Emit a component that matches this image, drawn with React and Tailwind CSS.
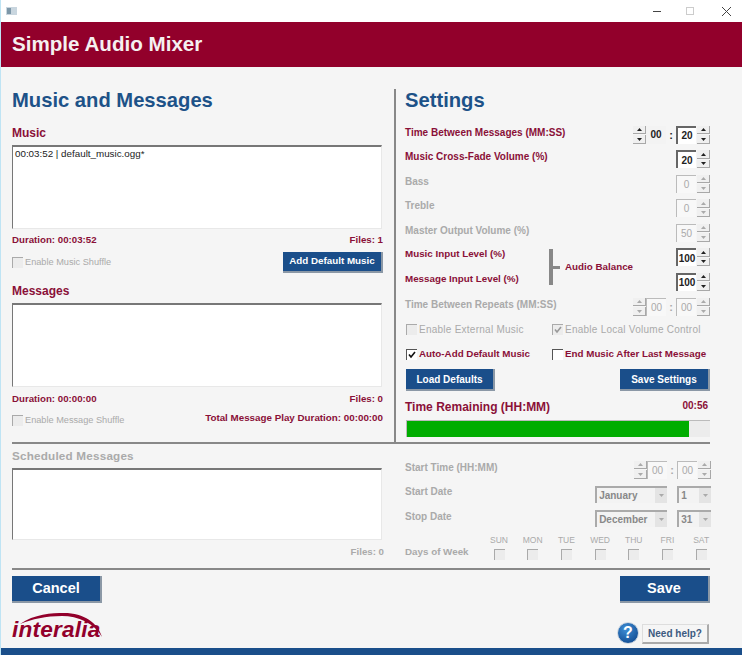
import React from 'react';

const Tri = ({ up, off }) => (
  <svg width="5" height="3" viewBox="0 0 5 3" className="block">
    <path d={up ? 'M2.5 0L5 3H0z' : 'M0 0h5L2.5 3z'} fill={off ? '#aaa' : '#222'} />
  </svg>
);

const Stepper = ({ off }) => (
  <div className="w-[13px] h-[18px] flex flex-col gap-px">
    <div className="flex-1 flex items-center justify-center bg-[#f0f0f0] border-r border-b border-[#a8a8a8]">
      <Tri up off={off} />
    </div>
    <div className="flex-1 flex items-center justify-center bg-[#f0f0f0] border-r border-b border-[#a8a8a8]">
      <Tri off={off} />
    </div>
  </div>
);

const Field = ({ value, off, plain, w = 'w-[20px]' }) => (
  <div
    className={`${w} h-[18px] flex items-center justify-center text-[10px] ${
      plain ? 'bg-[#f3f3f3]' : off ? 'bg-[#f8f8f8] border-t border-l border-[#bbb]' : 'bg-white border-t-2 border-l-2 border-[#666]'
    } ${off ? 'text-[#aaa]' : 'text-[#222] font-bold'}`}
  >
    {value}
  </div>
);

const Spin = ({ value, off }) => (
  <div className="flex items-center gap-px">
    <Field value={value} off={off} />
    <Stepper off={off} />
  </div>
);

const TimeSpin = ({ a, b, off }) => (
  <div className="flex items-center">
    <Stepper off={off} />
    <Field value={a} off={off} plain={!off} />
    <span className={`w-[10px] text-center text-[11px] font-bold ${off ? 'text-[#aaa]' : 'text-[#222]'}`}>:</span>
    <Field value={b} off={off} />
    <div className="ml-px">
      <Stepper off={off} />
    </div>
  </div>
);

const Check = ({ checked, off }) => (
  <div className={`w-[11px] h-[11px] flex items-center justify-center border-t-[1.5px] border-l-[1.5px] ${off ? 'border-[#aaa] bg-[#ececec]' : 'border-[#555] bg-white'}`}>
    {checked && (
      <svg width="8" height="8" viewBox="0 0 8 8">
        <path d="M1 3.5L3 6L7 1" fill="none" stroke={off ? '#999' : '#111'} strokeWidth="1.6" />
      </svg>
    )}
  </div>
);

const CheckLabel = ({ label, checked, off, small }) => (
  <div className="flex items-center gap-[2px] whitespace-nowrap">
    <Check checked={checked} off={off} />
    <span className={small ? 'text-[9.2px] text-[#aaa]' : off ? 'text-[10px] tracking-[0.25px] text-[#aaa]' : 'text-[9.8px] text-[#8a1038] font-bold'}>{label}</span>
  </div>
);

const Btn = ({ children, className }) => (
  <button className={`flex items-center justify-center bg-[#1a4e8a] text-white font-bold border-r-2 border-b-2 border-[#8b98a6] ${className}`}>
    {children}
  </button>
);

const ListBox = ({ children, className }) => (
  <div className={`w-[370px] bg-white border-t-2 border-l border-r border-b border-t-[#777] border-l-[#777] border-r-[#e8e8e8] border-b-[#e8e8e8] px-[2px] text-[9.8px] text-[#222] ${className}`}>
    {children}
  </div>
);

const Row = ({ label, off, children, h = 'h-[24.5px]' }) => (
  <div className={`${h} flex items-center justify-between`}>
    <span className={`text-[10px] font-bold ${off ? 'text-[#aaa]' : 'text-[#8a1038]'}`}>{label}</span>
    <div className="mt-[5px]">{children}</div>
  </div>
);

const Select = ({ value, w }) => (
  <div className={`${w} h-[17px] flex items-center justify-between bg-[#f3f3f3] border-t-2 border-l-2 border-[#aaa] pl-[2px] text-[10px] font-bold text-[#888]`}>
    {value}
    <div className="w-[12px] h-[15px] flex items-center justify-center bg-[#e4e4e4]">
      <Tri off />
    </div>
  </div>
);

const days = ['SUN', 'MON', 'TUE', 'WED', 'THU', 'FRI', 'SAT'];

export default function App() {
  return (
    <div className="w-[742px] h-[655px] flex flex-col overflow-hidden bg-[#f5f5f5] border-l border-[#bfe4f4] font-['Liberation_Sans',Arial,sans-serif]">
      <div className="h-[22px] shrink-0 bg-white flex items-center justify-between pl-[5px] pr-[11px]">
        <svg width="11" height="8" viewBox="0 0 11 8">
          <rect width="11" height="8" fill="#c9d6df" />
          <rect x="1" y="1" width="4" height="6" fill="#7d97a8" />
        </svg>
        <div className="flex items-center">
          <div className="w-[8px] h-px bg-[#444]" />
          <div className="ml-[25px] w-[8px] h-[8px] border border-[#ccc]" />
          <svg width="9" height="9" viewBox="0 0 9 9" className="ml-[28px]">
            <path d="M0 0L9 9M9 0L0 9" stroke="#444" strokeWidth="1" />
          </svg>
        </div>
      </div>

      <div className="h-[45px] shrink-0 bg-[#92002b] flex items-center pl-[11px] text-[20.6px] font-bold text-[#f5f0f0]">
        Simple Audio Mixer
      </div>

      <div className="flex-1 flex flex-col pl-[11px]">
        <div className="w-[698px] h-[377px] shrink-0 flex border-b-2 border-[#888]">
          <div className="w-[382px] shrink-0 flex flex-col">
            <h1 className="h-[47px] mt-[10px] shrink-0 flex items-center text-[20.2px] font-bold text-[#1d5288]">Music and Messages</h1>
            <div className="h-[21px] pb-[3px] shrink-0 flex items-center text-[12px] font-bold text-[#8a1038]">Music</div>
            <ListBox className="h-[84px]">00:03:52 | default_music.ogg*</ListBox>
            <div className="w-[371px] h-[23px] flex items-center justify-between text-[9.7px] font-bold text-[#8a1038]">
              <span>Duration: 00:03:52</span>
              <span>Files: 1</span>
            </div>
            <div className="w-[371px] h-[21px] flex items-center justify-between">
              <CheckLabel label="Enable Music Shuffle" off small />
              <Btn className="w-[100px] h-[21px] text-[9.8px]">Add Default Music</Btn>
            </div>
            <div className="h-[30px] pt-[6px] shrink-0 flex items-center text-[12px] font-bold text-[#8a1038]">Messages</div>
            <ListBox className="h-[84px]" />
            <div className="w-[371px] h-[25px] flex items-center justify-between text-[9.7px] font-bold text-[#8a1038]">
              <span>Duration: 00:00:00</span>
              <span>Files: 0</span>
            </div>
            <div className="w-[371px] h-[12px] flex items-center justify-between">
              <div className="pt-[5px]">
                <CheckLabel label="Enable Message Shuffle" off small />
              </div>
              <span className="text-[9.8px] font-bold text-[#8a1038]">Total Message Play Duration: 00:00:00</span>
            </div>
          </div>

          <div className="flex-1 mt-[22px] border-l-2 border-[#888] pl-[9px] flex flex-col">
            <h2 className="h-[21px] mt-px shrink-0 flex items-center text-[20.2px] font-bold text-[#1d5288]">Settings</h2>
            <div className="h-[9px] shrink-0" />
            <Row label="Time Between Messages (MM:SS)"><TimeSpin a="00" b="20" /></Row>
            <Row label="Music Cross-Fade Volume (%)"><Spin value="20" /></Row>
            <Row label="Bass" off><Spin value="0" off /></Row>
            <Row label="Treble" off><Spin value="0" off /></Row>
            <Row label="Master Output Volume (%)" off><Spin value="50" off /></Row>
            <div className="h-[49px] flex items-center">
              <div className="w-[144px] flex flex-col text-[9.8px] font-bold text-[#8a1038]">
                <span className="h-[24.5px] flex items-center">Music Input Level (%)</span>
                <span className="h-[24.5px] flex items-center">Message Input Level (%)</span>
              </div>
              <div className="w-[4px] h-[36px] bg-[#888]" />
              <div className="w-[7px] h-[3px] bg-[#888]" />
              <span className="ml-[5px] text-[9.8px] font-bold text-[#8a1038]">Audio Balance</span>
              <div className="ml-auto flex flex-col">
                <div className="h-[24.5px] flex items-center pt-[5px]"><Spin value="100" /></div>
                <div className="h-[24.5px] flex items-center pt-[5px]"><Spin value="100" /></div>
              </div>
            </div>
            <Row label="Time Between Repeats (MM:SS)" off h="h-[25.5px]"><TimeSpin a="00" b="00" off /></Row>
            <div className="h-[25px] pl-px flex items-center">
              <div className="w-[146px]"><CheckLabel label="Enable External Music" off /></div>
              <CheckLabel label="Enable Local Volume Control" checked off />
            </div>
            <div className="h-[25px] pl-px flex items-center">
              <div className="w-[146px]"><CheckLabel label="Auto-Add Default Music" checked /></div>
              <CheckLabel label="End Music After Last Message" />
            </div>
            <div className="mt-[2px] pl-px flex justify-between">
              <Btn className="w-[89px] h-[22px] text-[10px]">Load Defaults</Btn>
              <Btn className="w-[90px] h-[22px] text-[10px]">Save Settings</Btn>
            </div>
            <div className="h-[29px] pt-[3px] flex items-center justify-between">
              <span className="text-[12px] font-bold text-[#8a1038]">Time Remaining (HH:MM)</span>
              <span className="text-[10px] font-bold text-[#8a1038] pr-[2px] pb-[4px]">00:56</span>
            </div>
            <div className="h-[17px] ml-px bg-[#ececec] border-t border-l border-[#bbb]">
              <div className="w-[282px] h-full bg-[#00ad00]" />
            </div>
          </div>
        </div>

        <div className="w-[698px] h-[126px] shrink-0 flex border-b-2 border-[#888]">
          <div className="w-[382px] shrink-0 flex flex-col">
            <div className="h-[24px] shrink-0 flex items-center text-[11.7px] font-bold text-[#aaa] tracking-[0.2px]">Scheduled Messages</div>
            <ListBox className="h-[72px]" />
            <div className="w-[372px] h-[24px] flex items-center justify-end text-[9.7px] font-bold text-[#aaa]">Files: 0</div>
          </div>
          <div className="flex-1 pl-[11px] flex flex-col pt-[11px]">
            <Row label="Start Time (HH:MM)" off><TimeSpin a="00" b="00" off /></Row>
            <Row label="Start Date" off>
              <div className="flex gap-[10px]">
                <Select value="January" w="w-[72px]" />
                <Select value="1" w="w-[34px]" />
              </div>
            </Row>
            <Row label="Stop Date" off>
              <div className="flex gap-[10px]">
                <Select value="December" w="w-[72px]" />
                <Select value="31" w="w-[34px]" />
              </div>
            </Row>
            <div className="mt-[5px] flex items-end">
              <span className="w-[84px] pb-[1px] text-[9.8px] font-bold text-[#aaa]">Days of Week</span>
              <div className="flex gap-[13.7px]">
                {days.map((d) => (
                  <div key={d} className="w-[20px] flex flex-col items-center gap-[3px]">
                    <span className="text-[8.5px] text-[#aaa]">{d}</span>
                    <Check off />
                  </div>
                ))}
              </div>
            </div>
          </div>
        </div>

        <div className="w-[698px] flex justify-between pt-[6px]">
          <Btn className="w-[90px] h-[27px] text-[14.5px]">Cancel</Btn>
          <Btn className="w-[90px] h-[27px] text-[14.5px]">Save</Btn>
        </div>

        <div className="w-[698px] h-[41px] flex items-end justify-between">
          <div className="relative w-[91px] h-[38px] flex items-end">
            <svg width="91" height="26" viewBox="0 0 91 26" className="absolute left-0 top-[7px]">
              <path d="M8 11C22 1 40 0 52 0C72 0 86 10 90 24C82 10 66 3 50 3C34 3 20 6 8 11z" fill="#92002b" />
            </svg>
            <span className="pb-[2px] text-[22.6px] leading-[24px] italic font-bold text-[#92002b] tracking-[0.2px]">interalia</span>
          </div>
          <div className="flex items-end gap-[3px] pr-[1px]">
            <div className="w-[22px] h-[22px] rounded-full flex items-center justify-center bg-[radial-gradient(circle_at_40%_30%,#3f8fd6,#0a3f85)] border border-[#cfd8e2] text-white text-[16px] font-bold">?</div>
            <button className="w-[67px] h-[20px] bg-[#f5f5f5] border border-[#ddd] border-r-2 border-b-2 border-r-[#aaa] border-b-[#aaa] text-[10px] font-bold text-[#3c5a80]">Need help?</button>
          </div>
        </div>
      </div>

      <div className="h-[7px] shrink-0 bg-[#1a4e8a]" />
    </div>
  );
}
